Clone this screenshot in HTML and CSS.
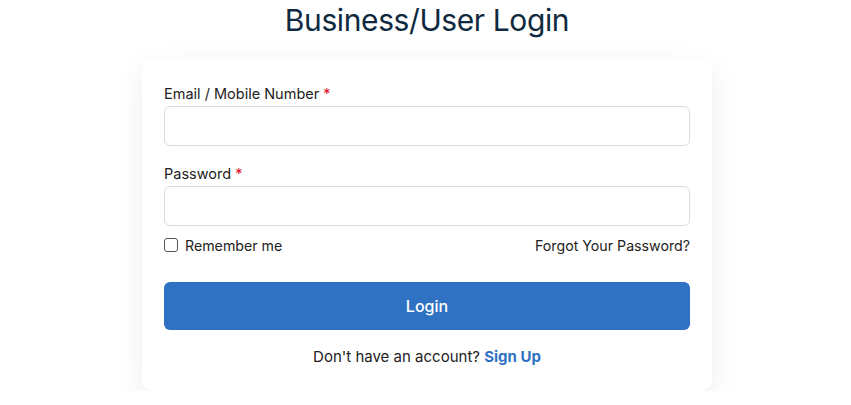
FILE: index.html
```html
<!DOCTYPE html>
<html lang="en">
<head>
<meta charset="utf-8">
<title>Business/User Login</title>
<link rel="stylesheet" href="styles.css">
</head>
<body>
<main class="page">
  <h1 class="title">Business/User Login</h1>
  <form class="card">
    <div class="field">
      <label class="label" for="email">Email / Mobile Number <span class="req">*</span></label>
      <input class="input" id="email" type="text">
    </div>
    <div class="field">
      <label class="label" for="pw">Password <span class="req">*</span></label>
      <input class="input" id="pw" type="password">
    </div>
    <div class="row">
      <label class="remember"><span class="check"></span>Remember me</label>
      <a class="forgot" href="#">Forgot Your Password?</a>
    </div>
    <button class="btn" type="button">Login</button>
    <p class="signup">Don't have an account? <a href="#">Sign Up</a></p>
  </form>
</main>
</body>
</html>
```
FILE: styles.css
```css
* { box-sizing: border-box; }
html, body { margin: 0; padding: 0; background: #ffffff; }
body { font-family: Inter, "Noto Sans", sans-serif; color: #222; }
.page { display: flex; flex-direction: column; align-items: center; padding-left: 3px; }
.title {
  margin: 0;
  font-family: Inter, sans-serif;
  font-weight: 400;
  font-size: 30px;
  line-height: 40px;
  color: #0f2a40;
  letter-spacing: -0.4px;
}
.card {
  margin-top: 19px;
  width: 570px;
  background: #fff;
  border-radius: 12px;
  padding: 26px 22px 23px;
  box-shadow: 0 8px 30px rgba(0, 0, 0, 0.07);
  display: flex;
  flex-direction: column;
}
.field { display: flex; flex-direction: column; margin-bottom: 19px; }
.field + .field { margin-bottom: 9px; }
.label { font-size: 14.5px; line-height: 18px; margin-bottom: 3px; color: #222; }
.req { color: #e0141e; }
.input {
  height: 40px;
  border: 1px solid #dcdcdf;
  border-radius: 6px;
  font: inherit;
  padding: 0 12px;
  outline: none;
}
.row { display: flex; justify-content: space-between; align-items: center; height: 20px; font-size: 14.2px; }
.remember { display: flex; align-items: center; gap: 7px; color: #222; }
.check { width: 14px; height: 14px; border: 1.5px solid #555; border-radius: 3px; }
.forgot { color: #222; text-decoration: none; }
.btn {
  margin-top: 27px;
  height: 48px;
  border: none;
  border-radius: 6px;
  background: #2f72c4;
  color: #fff;
  font-family: Inter, sans-serif;
  font-size: 16px;
  font-weight: 500;
}
.signup { margin: 16px 0 0; text-align: center; font-size: 15px; line-height: 22px; color: #222; }
.signup a { color: #2f72c4; font-weight: 700; text-decoration: none; }
```
